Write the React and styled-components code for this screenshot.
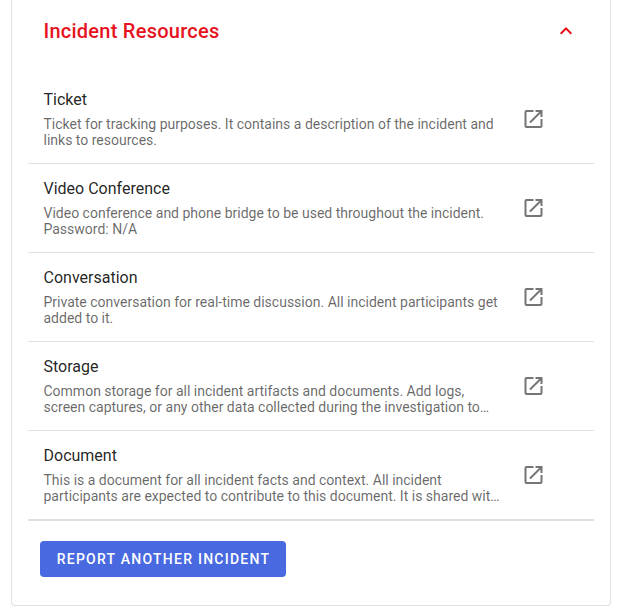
import React from 'react';
import styled, { createGlobalStyle } from 'styled-components';

const GlobalStyle = createGlobalStyle`
  * { box-sizing: border-box; }
  body { margin: 0; background: #fff; font-family: Roboto, sans-serif; overflow: hidden; }
`;

const Card = styled.main`
  width: 600px;
  height: 606px;
  margin-left: 11px;
  padding: 0 16px;
  border: 1px solid #e0e0e0;
  border-top: 0;
  border-radius: 0 0 4px 4px;
`;

const Header = styled.header`
  display: flex;
  align-items: center;
  justify-content: space-between;
  height: 62px;
  padding: 0 16px 0 15.5px;
  color: #e50914;
`;

const Title = styled.h2`
  margin: 0;
  color: #e6131e;
  font-size: 20px;
  font-weight: 500;
  line-height: 24px;
  letter-spacing: 0.25px;
`;

const List = styled.ul`
  margin: 0;
  padding: 13px 0 0;
  list-style: none;
  border-bottom: 1px solid #e0e0e0;
`;

const Row = styled.li`
  display: flex;
  align-items: center;
  height: 89px;
  padding: 0 48px 0 15.5px;
  border-bottom: 1px solid #e0e0e0;
`;

const Content = styled.div`
  width: 458px;
  flex: none;
`;

const Name = styled.div`
  margin-bottom: 7px;
  color: rgba(0, 0, 0, 0.87);
  font-size: 16px;
  line-height: 19px;
`;

const Description = styled.p`
  margin: 0;
  color: rgba(0, 0, 0, 0.6);
  font-size: 14px;
  line-height: 16px;
  white-space: pre-line;
`;

const OpenLink = styled.a`
  display: flex;
  margin-left: auto;
  color: #757575;
`;

const Report = styled.button`
  display: block;
  height: 36px;
  width: 246px;
  margin: 20px 0 0 12px;
  padding: 0 0 0 1px;
  border: 0;
  border-radius: 4px;
  background: #4969e1;
  color: #fff;
  font: 500 14px Roboto, sans-serif;
  letter-spacing: 1.25px;
`;

const Icon = ({ d, shift = 0 }) => (
  <svg width="24" height="24" viewBox={`${shift} 0 24 24`} fill="currentColor"><path d={d} /></svg>
);

const CHEVRON = 'M7.41 15.41 12 10.83l4.59 4.58L18 14l-6-6-6 6 1.41 1.41Z';
const OPEN = 'M14 3v2h3.59l-9.83 9.83 1.41 1.41L19 6.41V10h2V3m-2 16H5V5h7V3H5a2 2 0 0 0-2 2v14a2 2 0 0 0 2 2h14a2 2 0 0 0 2-2v-7h-2v7Z';

const resources = [
  ['Ticket', 'Ticket for tracking purposes. It contains a description of the incident and\nlinks to resources.'],
  ['Video Conference', 'Video conference and phone bridge to be used throughout the incident.\nPassword: N/A'],
  ['Conversation', 'Private conversation for real-time discussion. All incident participants get\nadded to it.'],
  ['Storage', 'Common storage for all incident artifacts and documents. Add logs,\nscreen captures, or any other data collected during the investigation to…'],
  ['Document', 'This is a document for all incident facts and context. All incident\nparticipants are expected to contribute to this document. It is shared wit…'],
];

export default function App() {
  return (
    <>
      <GlobalStyle />
      <Card>
        <Header>
          <Title>Incident Resources</Title>
          <Icon d={CHEVRON} />
        </Header>
        <List>
          {resources.map(([name, description]) => (
            <Row key={name}>
              <Content>
                <Name>{name}</Name>
                <Description>{description}</Description>
              </Content>
              <OpenLink href="#" aria-label={`Open ${name}`}><Icon d={OPEN} shift={0.5} /></OpenLink>
            </Row>
          ))}
        </List>
        <Report>REPORT ANOTHER INCIDENT</Report>
      </Card>
    </>
  );
}
